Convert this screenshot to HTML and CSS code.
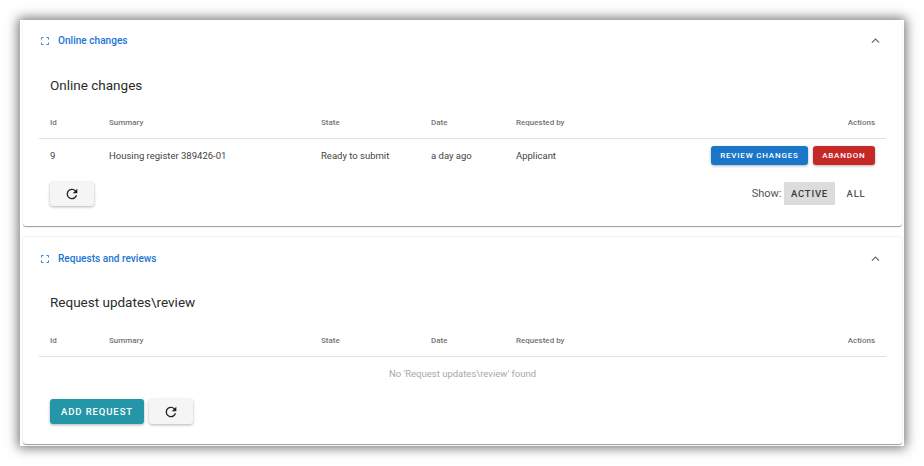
FILE: index.html
```html
<!DOCTYPE html>
<html lang="en">
<head>
    <meta charset="UTF-8">
    <title>Online changes</title>
    <link rel="stylesheet" href="styles.css">
</head>
<body>
    <div class="frame">
        <section class="panel">
            <div class="panel-header">
                <svg class="expand-icon" viewBox="0 0 8 8"><path d="M0.5 2.5V0.5H2.5M5.5 0.5H7.5V2.5M7.5 5.5V7.5H5.5M2.5 7.5H0.5V5.5"/></svg>
                <span class="panel-title">Online changes</span>
                <svg class="chevron" viewBox="0 0 10 6"><path d="M1 5.2L5 1.2L9 5.2"/></svg>
            </div>
            <div class="panel-body">
                <h2>Online changes</h2>
                <div class="row head">
                    <span>Id</span><span>Summary</span><span>State</span><span>Date</span><span>Requested by</span><span class="right">Actions</span>
                </div>
                <div class="row item">
                    <span>9</span><span>Housing register 389426-01</span><span>Ready to submit</span><span>a day ago</span><span>Applicant</span>
                    <span class="actions">
                        <button class="button small blue">Review changes</button>
                        <button class="button small red">Abandon</button>
                    </span>
                </div>
                <div class="toolbar">
                    <button class="button refresh"><svg viewBox="0 0 24 24"><path d="M17.65 6.35A7.96 7.96 0 0 0 12 4a8 8 0 1 0 7.73 10h-2.08A6 6 0 1 1 12 6c1.66 0 3.14.69 4.22 1.78L13 11h7V4l-2.35 2.35z"/></svg></button>
                    <div class="show">
                        <span class="show-label">Show:</span>
                        <button class="toggle on">Active</button>
                        <button class="toggle">All</button>
                    </div>
                </div>
            </div>
        </section>

        <section class="panel second">
            <div class="panel-header">
                <svg class="expand-icon" viewBox="0 0 8 8"><path d="M0.5 2.5V0.5H2.5M5.5 0.5H7.5V2.5M7.5 5.5V7.5H5.5M2.5 7.5H0.5V5.5"/></svg>
                <span class="panel-title">Requests and reviews</span>
                <svg class="chevron" viewBox="0 0 10 6"><path d="M1 5.2L5 1.2L9 5.2"/></svg>
            </div>
            <div class="panel-body">
                <h2>Request updates\review</h2>
                <div class="row head">
                    <span>Id</span><span>Summary</span><span>State</span><span>Date</span><span>Requested by</span><span class="right">Actions</span>
                </div>
                <p class="empty">No 'Request updates\review' found</p>
                <div class="toolbar left">
                    <button class="button teal">Add request</button>
                    <button class="button refresh"><svg viewBox="0 0 24 24"><path d="M17.65 6.35A7.96 7.96 0 0 0 12 4a8 8 0 1 0 7.73 10h-2.08A6 6 0 1 1 12 6c1.66 0 3.14.69 4.22 1.78L13 11h7V4l-2.35 2.35z"/></svg></button>
                </div>
            </div>
        </section>
    </div>
</body>
</html>
```

FILE: styles.css
```css
body {
    margin: 0;
    padding: 20px;
    background-color: #ffffff;
    font-family: Roboto, Arial, sans-serif;
    color: #212121;
}

.frame {
    width: 884px;
    height: 426px;
    box-sizing: border-box;
    padding: 0 2px 0 3px;
    background-color: #ffffff;
    box-shadow: 0 0 11px 2px rgba(0, 0, 0, 0.55);
}

.panel {
    height: 206px;
    box-sizing: border-box;
    border-radius: 3px;
    box-shadow: 0 1px 1px rgba(0, 0, 0, 0.4);
}

.second {
    height: 207px;
    margin-top: 11px;
    box-shadow: 0 1px 1px rgba(0, 0, 0, 0.4), 0 -1px 2px rgba(0, 0, 0, 0.06);
}

.panel-header {
    display: flex;
    align-items: center;
    height: 41px;
    padding: 0 22px 0 18px;
}

.second .panel-header {
    height: 43px;
}

.expand-icon {
    width: 8px;
    height: 8px;
    fill: none;
    stroke: #2f86d6;
    stroke-width: 1;
    margin-right: 9px;
}

.panel-title {
    flex: 1;
    font-size: 10.1px;
    font-weight: 500;
    color: #1976d2;
}

.chevron {
    width: 9px;
    height: 5.4px;
    fill: none;
    stroke: #666666;
    stroke-width: 1.2;
}

.panel-body {
    padding: 0 16px;
}

h2 {
    margin: 14px 0 0;
    padding-left: 11px;
    font-size: 13.5px;
    font-weight: 400;
    line-height: 20px;
    color: #2b2b2b;
}

.second h2 {
    margin-top: 12px;
}

.row {
    display: grid;
    grid-template-columns: 59px 212px 110px 85px 1fr auto;
    align-items: center;
    padding: 0 11px;
}

.head {
    height: 31px;
    margin-top: 10px;
    padding-top: 2px;
    border-bottom: 1px solid #e0e0e0;
    font-size: 8px;
    font-weight: 500;
    color: #757575;
}

.second .head {
    margin-top: 11px;
}

.item {
    height: 33px;
    font-size: 9.5px;
    color: #444444;
}

.right {
    text-align: right;
}

.actions {
    display: flex;
    gap: 5px;
}

.button {
    border: none;
    border-radius: 3px;
    font-family: Roboto, Arial, sans-serif;
    font-weight: 500;
    text-transform: uppercase;
    color: #ffffff;
    cursor: pointer;
    box-shadow: 0 1px 3px rgba(0, 0, 0, 0.3);
}

.small {
    height: 19px;
    padding: 0 9.5px;
    font-size: 8px;
    letter-spacing: 0.8px;
}

.blue {
    padding: 0 9px;
    background-color: #1976c8;
}

.red {
    background-color: #c62828;
}

.teal {
    height: 25px;
    padding: 0 11px;
    font-size: 9.5px;
    letter-spacing: 0.9px;
    background-color: #2397a8;
}

.refresh {
    display: flex;
    align-items: center;
    justify-content: center;
    width: 44px;
    height: 24px;
    padding: 0;
    background-color: #f5f5f5;
}

.toolbar.left .refresh {
    height: 25px;
}

.refresh svg {
    width: 16px;
    height: 16px;
    fill: #212121;
}

.toolbar {
    display: flex;
    align-items: flex-start;
    justify-content: space-between;
    height: 25px;
    margin-top: 10px;
    padding: 0 11px;
}

.toolbar.left {
    justify-content: flex-start;
    gap: 5px;
    margin-top: 0;
}

.show {
    display: flex;
    align-items: center;
}

.show-label {
    margin-right: 3px;
    font-size: 11px;
    color: #555555;
}

.toggle {
    height: 23px;
    padding: 0 9.5px;
    border: none;
    background: none;
    font-family: Roboto, Arial, sans-serif;
    font-size: 9.5px;
    font-weight: 500;
    letter-spacing: 0.8px;
    text-transform: uppercase;
    color: #555555;
}

.toggle.on {
    padding: 0 6.5px;
    margin-right: 2.5px;
    background-color: #dcdcdc;
    color: #3a3a3a;
}

.empty {
    height: 33px;
    margin: 0 0 9px;
    font-size: 9.5px;
    line-height: 33px;
    text-align: center;
    color: #a8a8a8;
}
```
